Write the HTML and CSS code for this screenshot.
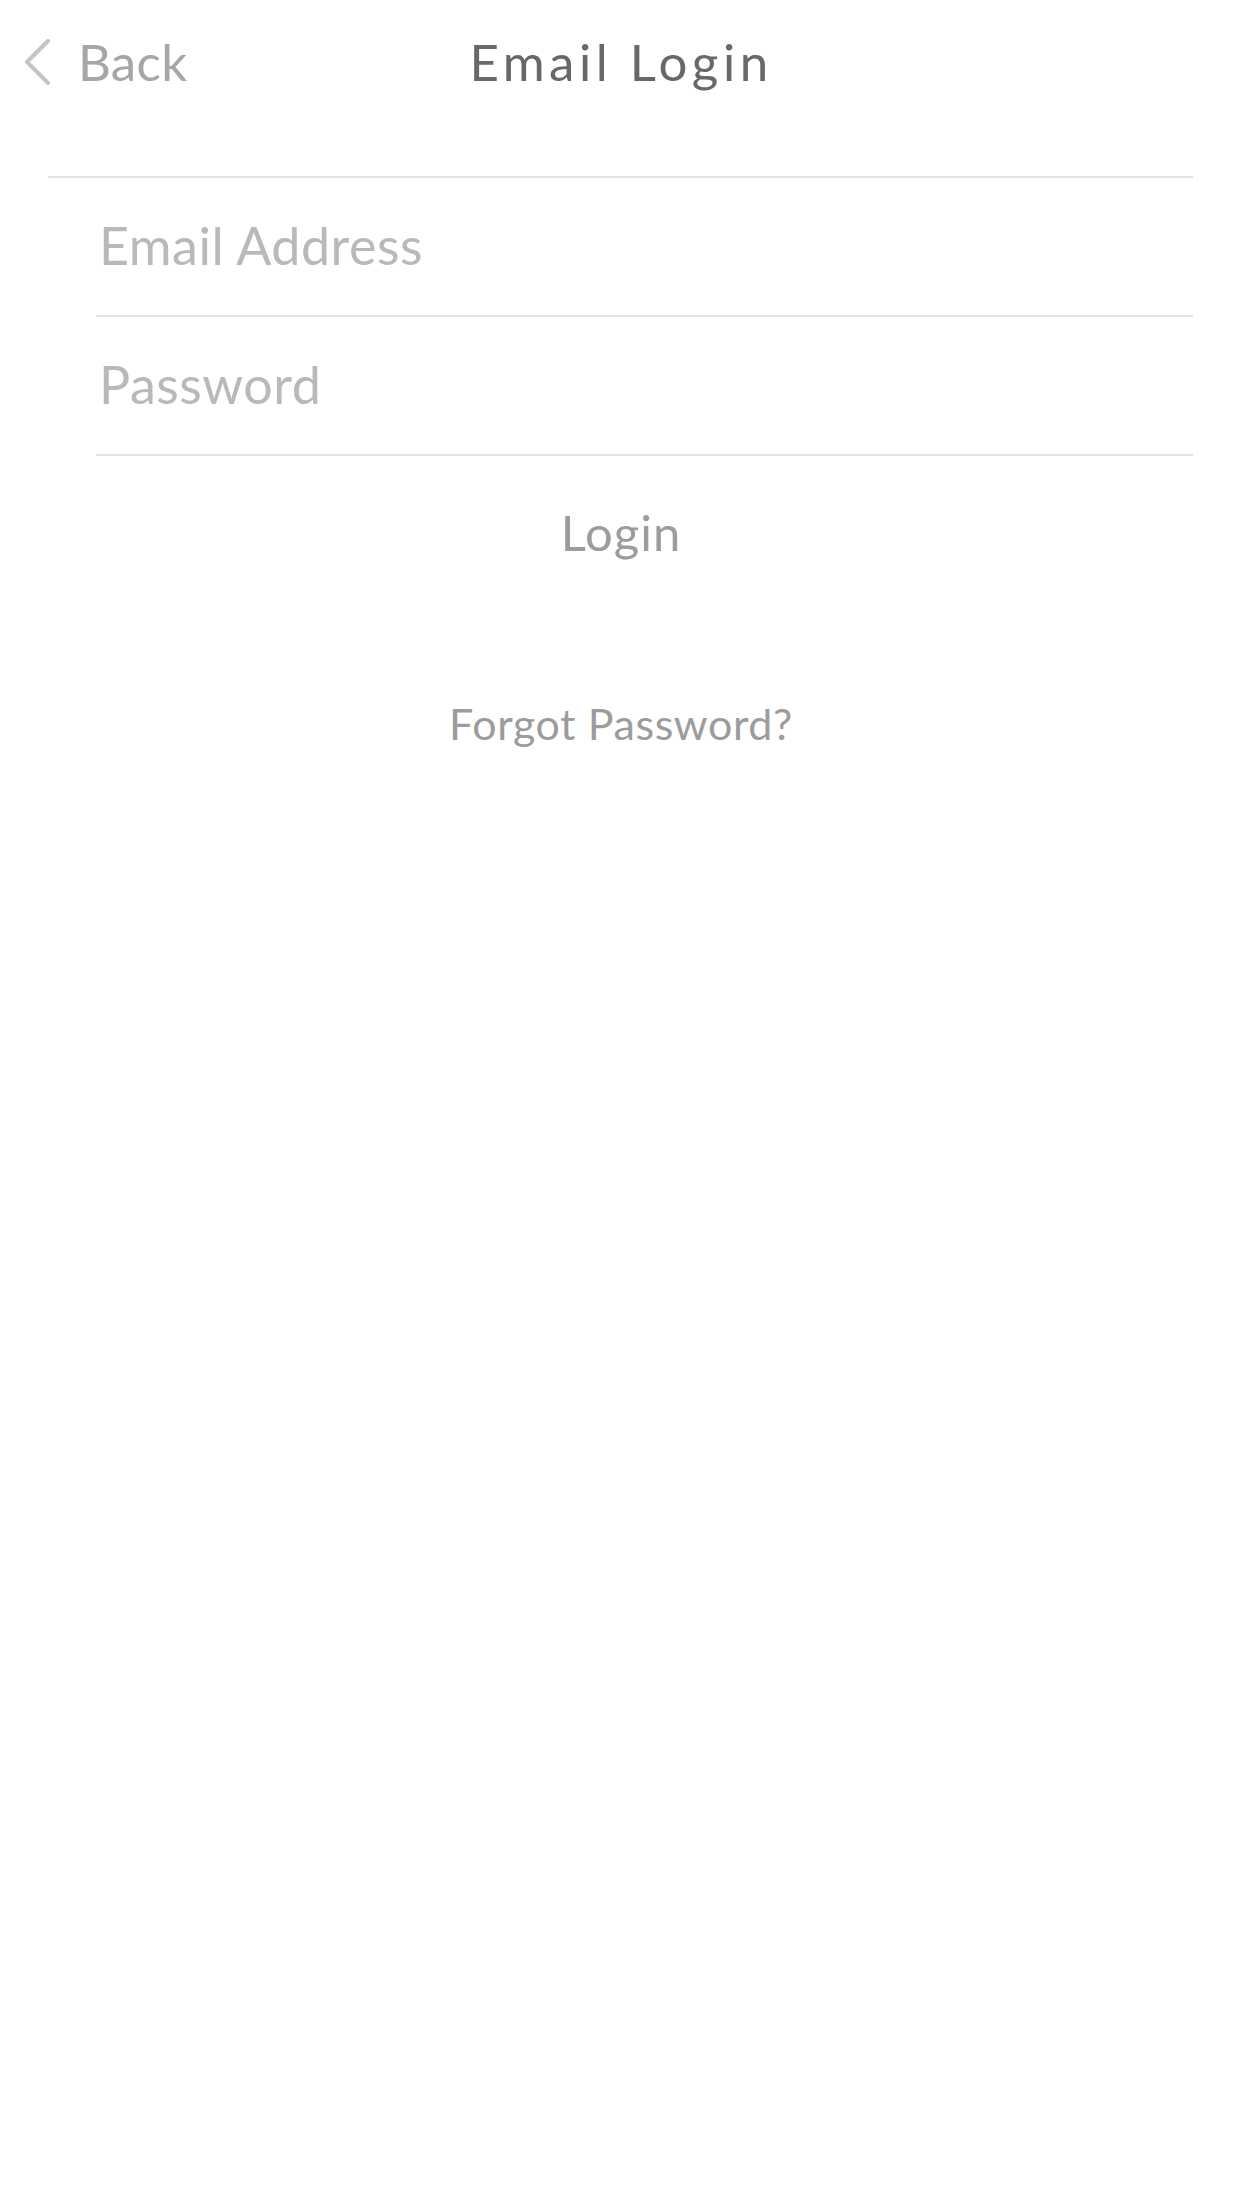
FILE: index.html
```html
<!DOCTYPE html>
<html>
<head>
<meta charset="utf-8">
<link rel="stylesheet" href="styles.css">
</head>
<body>
<div class="screen">
  <header class="nav">
    <div class="back">
      <svg class="chev" width="30" height="46" viewBox="0 0 30 46"><polyline points="25,2 4,23 25,44" fill="none" stroke="#c4c4c4" stroke-width="4" stroke-linecap="round" stroke-linejoin="round"/></svg>
      <span class="back-label">Back</span>
    </div>
    <h1 class="title">Email Login</h1>
  </header>
  <div class="form">
    <div class="field"><span class="placeholder">Email Address</span></div>
    <div class="field"><span class="placeholder">Password</span></div>
  </div>
  <div class="login">Login</div>
  <div class="forgot">Forgot Password?</div>
</div>
</body>
</html>
```

FILE: styles.css
```css
html, body {
  margin: 0;
  padding: 0;
  background: #ffffff;
}
.screen {
  width: 1242px;
  height: 2208px;
  font-family: Lato, "Noto Sans", sans-serif;
  background: #ffffff;
}
.nav {
  position: relative;
  height: 124px;
  display: flex;
  align-items: center;
  justify-content: center;
}
.back {
  position: absolute;
  left: 23px;
  top: 0;
  height: 124px;
  display: flex;
  align-items: center;
  gap: 25px;
}
.back-label {
  font-size: 51px;
  color: #a6a6a6;
  line-height: 60px;
  letter-spacing: 0.3px;
}
.title {
  margin: 0;
  font-weight: 400;
  font-size: 51px;
  letter-spacing: 4.5px;
  color: #686868;
  line-height: 60px;
}
.form {
  margin: 52px 49px 0 48px;
  border-top: 2px solid #e3e3e3;
}
.field {
  margin-left: 48px;
  height: 139px;
  border-bottom: 2px solid #e3e3e3;
  display: flex;
  align-items: center;
  padding-left: 3px;
  padding-bottom: 4px;
  box-sizing: border-box;
}
.placeholder {
  font-size: 52px;
  letter-spacing: 0.5px;
  color: #b9b9b9;
}
.login {
  text-align: center;
  font-size: 49px;
  letter-spacing: 1px;
  color: #9c9c9c;
  margin-top: 46px;
  line-height: 60px;
}
.forgot {
  text-align: center;
  font-size: 43px;
  letter-spacing: 0.6px;
  color: #9c9c9c;
  margin-top: 137px;
  line-height: 50px;
}
```
